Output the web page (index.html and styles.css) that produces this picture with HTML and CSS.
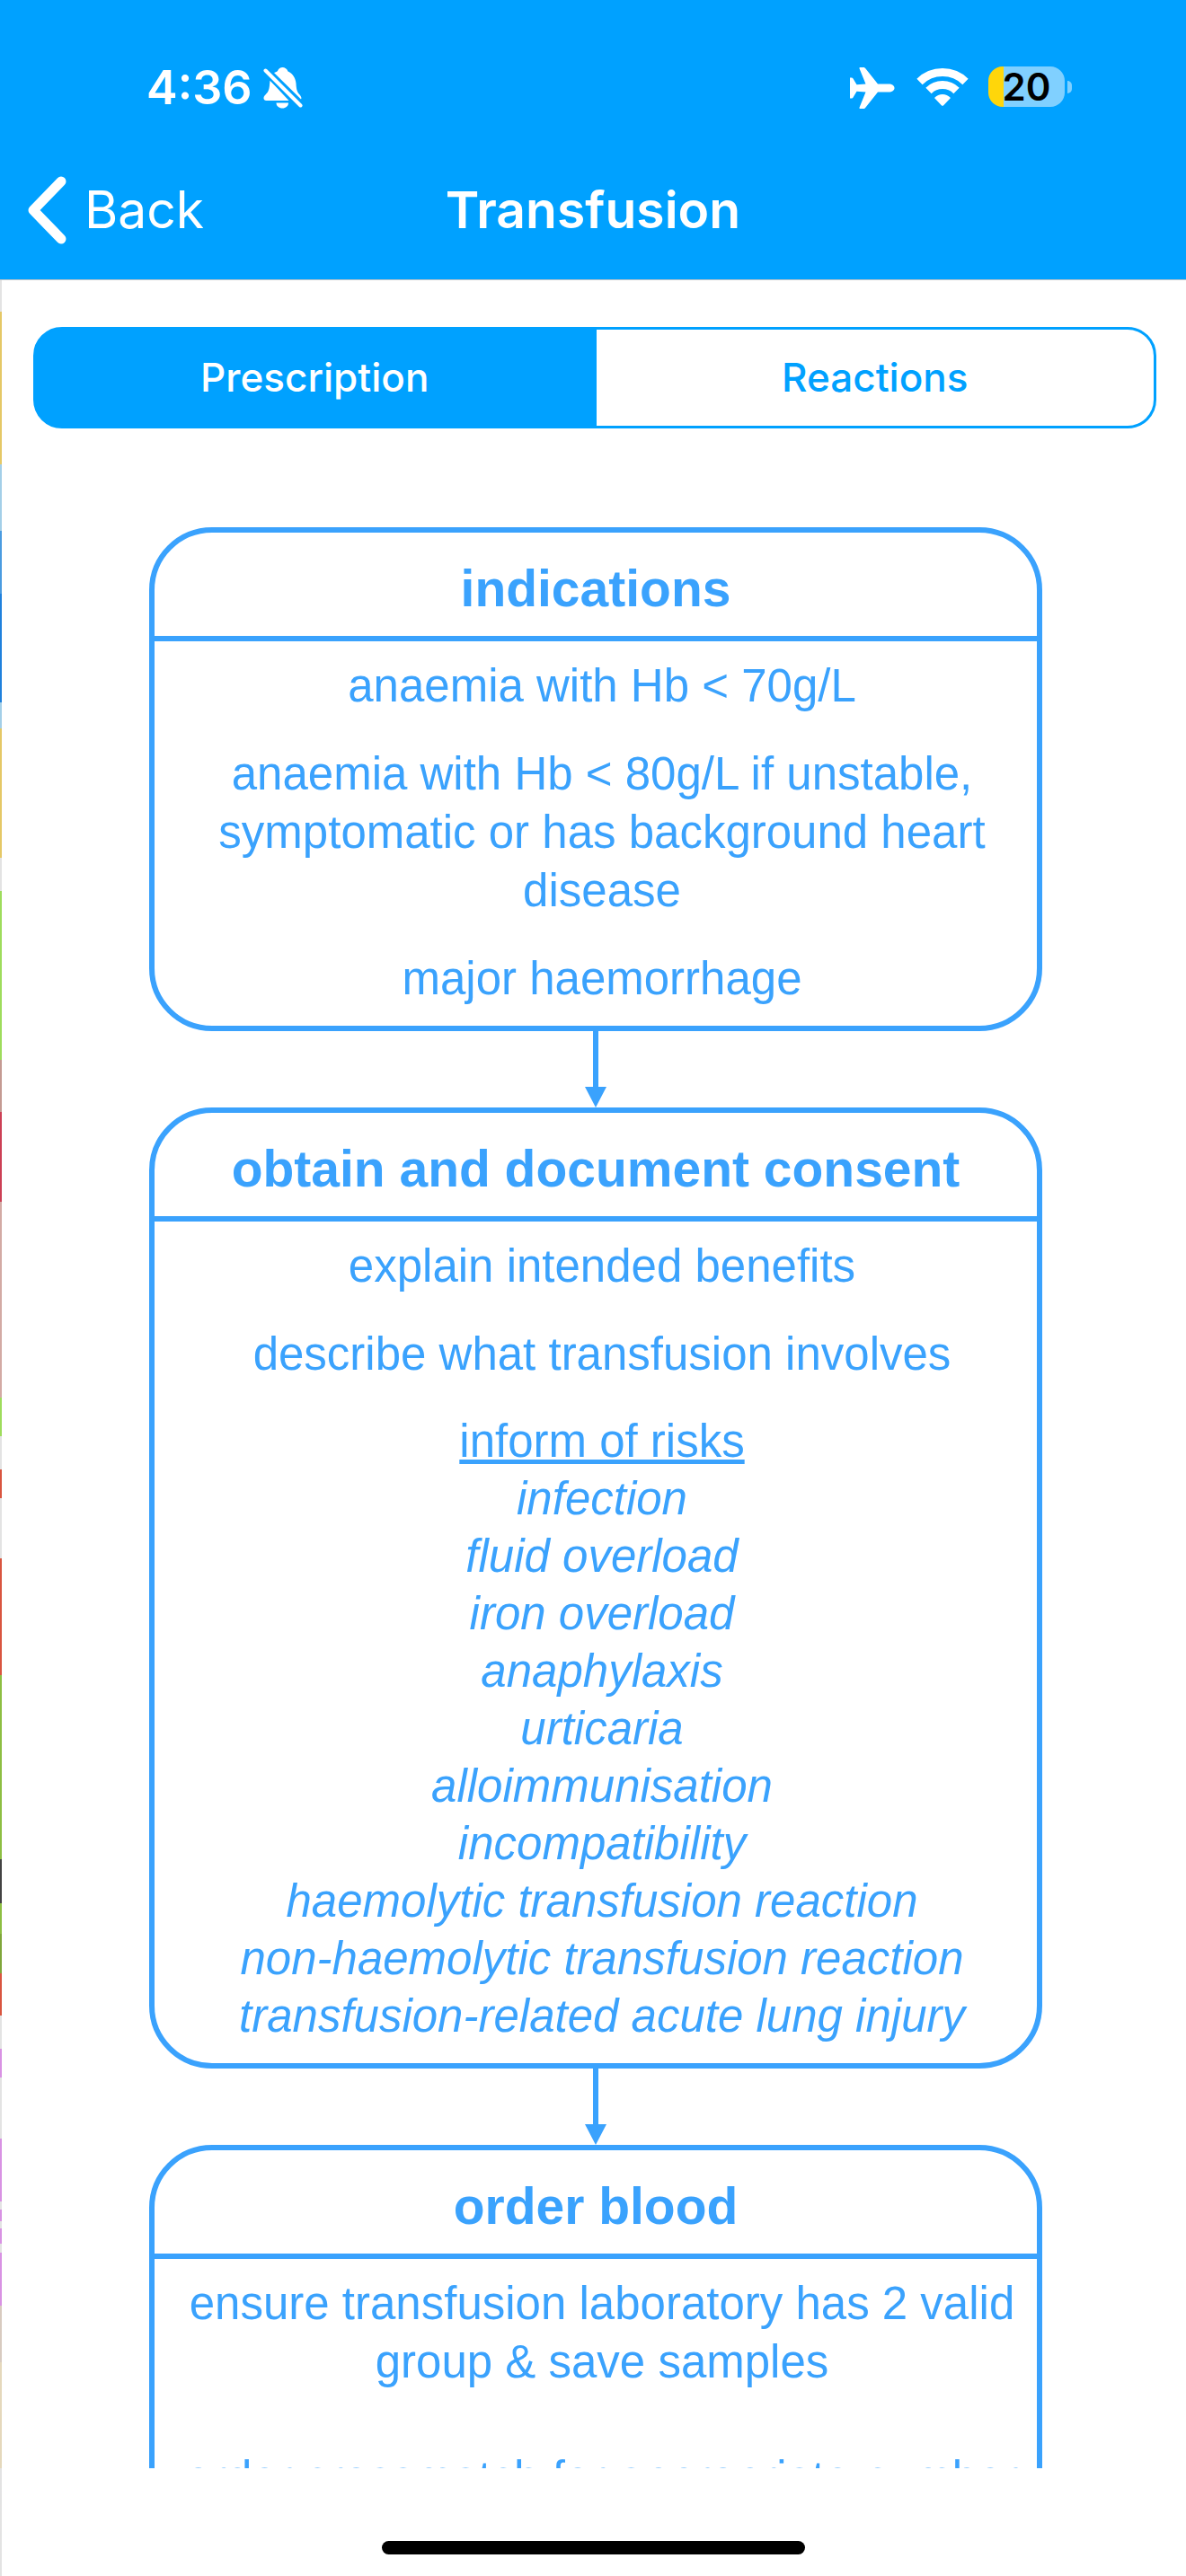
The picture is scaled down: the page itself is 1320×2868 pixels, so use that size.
FILE: index.html
```html
<!DOCTYPE html>
<html lang="en">
<head>
<meta charset="utf-8">
<meta name="viewport" content="width=device-width, initial-scale=1">
<title>Transfusion</title>
<link rel="stylesheet" href="styles.css">
</head>
<body>
<header class="top">
  <div class="status">
    <div class="status-side">
      <span class="time">4:36</span>
      <svg class="bell" viewBox="0 0 44 46" role="img" aria-label="Silent mode">
        <path fill="#fff" d="M12 6C14 5 15.500 5 16 4C17 1.500 19 0 21.500 0C24 0 26.500 1.500 27.500 4.500C33 7 36 12 36.500 18C36.800 25 38 28 41 31C42 32.500 43 34 42 35.500Z"/>
        <path fill="#fff" d="M7.500 14.500L28.500 37H3.500C.5 37 -.5 34 1.500 31.500C5 28 6.500 26 7 20Z"/>
        <path fill="#fff" d="M14.500 39.500H28C28 43 25 45.500 21.300 45.500C17.500 45.500 14.500 43 14.500 39.500Z"/>
        <path stroke="#00a1ff" stroke-width="8" d="M2 3.500L41.500 42.500"/>
        <path stroke="#fff" stroke-width="4" stroke-linecap="round" d="M2.500 3.500L41.500 42.500"/>
      </svg>
    </div>
    <div class="status-side">
      <svg class="plane" viewBox="0 0 50 46" role="img" aria-label="Airplane mode">
        <path fill="#fff" d="M43 18.500C47 18.500 49.500 20.500 49.500 23C49.500 25.500 47 27.500 43 27.500H31L17.500 44.500C16.700 45.500 16 46 15 46H11.500C10.500 46 10.300 45.300 10.600 44.500L17.500 27.500L7.500 26.800L3.500 33.500C3 34.300 2.500 34.500 1.800 34.500H0V11.500H1.800C2.500 11.500 3 11.800 3.500 12.500L7.500 19.200L17.500 18.500L10.600 1.500C10.300.7 10.500 0 11.500 0H15C16 0 16.700.5 17.500 1.500L31 18.500Z"/>
      </svg>
      <svg class="wifi" viewBox="0 0 58 43" role="img" aria-label="Wi-Fi">
        <g fill="none" stroke="#fff">
          <path stroke-width="9" d="M3.500 16A36.500 36.500 0 0 1 54.500 16"/>
          <path stroke-width="9" d="M13.500 26A22 22 0 0 1 44.500 26"/>
        </g>
        <path fill="#fff" d="M20 34C25 28.600 33 28.600 38 34L30.200 42.200C29.500 43 28.500 43 27.800 42.200Z"/>
      </svg>
      <span class="battery"><span class="battery-body">20</span><span class="battery-tip"></span></span>
    </div>
  </div>
  <nav class="bar">
    <button class="back" type="button">
      <svg class="chevron" viewBox="0 0 44 76" aria-hidden="true"><path fill="none" stroke="#fff" stroke-width="11" stroke-linecap="round" stroke-linejoin="round" d="M38 6L7 38L38 70"/></svg>
      Back
    </button>
    <h1 class="title">Transfusion</h1>
  </nav>
</header>

<main class="page">
  <div class="tabs" role="tablist">
    <button class="tab tab-on" type="button" role="tab" aria-selected="true">Prescription</button>
    <button class="tab" type="button" role="tab" aria-selected="false">Reactions</button>
  </div>
  <div class="flow">
    <section class="card">
      <h2 class="card-title">indications</h2>
      <div class="card-body">
        <p>anaemia with Hb &lt; 70g/L</p>
        <p>anaemia with Hb &lt; 80g/L if unstable, symptomatic or has background heart disease</p>
        <p>major haemorrhage</p>
      </div>
    </section>
    <svg class="arrow" viewBox="0 0 24 85" aria-hidden="true"><path d="M9 0H15V62H24L12 85L0 62H9Z"/></svg>
    <section class="card">
      <h2 class="card-title">obtain and document consent</h2>
      <div class="card-body">
        <p>explain intended benefits</p>
        <p>describe what transfusion involves</p>
        <div class="risks">
          <h3 class="risks-title">inform of risks</h3>
          <ul class="risk-list">
            <li>infection</li>
            <li>fluid overload</li>
            <li>iron overload</li>
            <li>anaphylaxis</li>
            <li>urticaria</li>
            <li>alloimmunisation</li>
            <li>incompatibility</li>
            <li>haemolytic transfusion reaction</li>
            <li>non-haemolytic transfusion reaction</li>
            <li>transfusion-related acute lung injury</li>
          </ul>
        </div>
      </div>
    </section>
    <svg class="arrow" viewBox="0 0 24 85" aria-hidden="true"><path d="M9 0H15V62H24L12 85L0 62H9Z"/></svg>
    <section class="card">
      <h2 class="card-title">order blood</h2>
      <div class="card-body card-body-loose">
        <p>ensure transfusion laboratory has 2 valid group &amp; save samples</p>
        <p>order crossmatch for appropriate number</p>
      </div>
    </section>
  </div>
</main>
<footer class="home"><span class="home-bar"></span></footer>
</body>
</html>
```
FILE: styles.css
```css
* { box-sizing: border-box; margin: 0; padding: 0; }

:root {
  --bar: #00a1ff;
  --line: #3aa2fd;
}

/* The previous screen shows as a 2px sliver along the left edge. */
body {
  display: flex;
  flex-direction: column;
  height: 100vh;
  font-family: Inter, "Liberation Sans", sans-serif;
  background: #fff linear-gradient(
    #e3e3e3 347px, #e5c866 347px 517px, #a3cfe8 517px 591px, #4a9be0 591px 661px,
    #1f80dc 661px 782px, #a3cfe8 782px 811px, #e5c866 811px 955px, #e3e3e3 955px 992px,
    #9edc5c 992px 1180px, #c49a92 1180px 1238px, #cc3f55 1238px 1338px, #d3aaa4 1338px 1556px,
    #9edc5c 1556px 1599px, #e3e3e3 1599px 1636px, #d9553f 1636px 1668px, #e3e3e3 1668px 1735px,
    #d9553f 1735px 1865px, #8dbe42 1865px 2070px, #434343 2070px 2119px, #8dbe42 2119px 2153px,
    #7fa63a 2153px 2197px, #d9553f 2197px 2244px, #e3e3e3 2244px 2281px, #d892e3 2281px 2313px,
    #e3e3e3 2313px 2381px, #d892e3 2381px 2451px, #e3e3e3 2451px 2460px, #d892e3 2460px 2473px,
    #e3e3e3 2473px 2481px, #d892e3 2481px 2498px, #e3e3e3 2498px 2508px, #d892e3 2508px 2567px,
    #d8cbc0 2567px 2630px, #e5d8bc 2630px 2748px, #e3e3e3 2748px) left top / 2px 100% no-repeat;
}

button { font: inherit; color: inherit; border: 0; background: none; }

.top { flex: none; color: #fff; background: var(--bar); border-bottom: 1px solid #c4c4c4; }

.status {
  display: flex;
  justify-content: space-between;
  padding: 64px 127px 0 163px;
}
.status-side { display: flex; align-items: center; height: 68px; }
.time { font-size: 52px; font-weight: 600; line-height: 68px; }
.bell { width: 44px; height: 46px; margin-left: 12px; }
.plane { width: 50px; height: 46px; margin-right: 24px; }
.wifi { width: 58px; height: 43px; margin: 0 22px 3px 0; }
.battery { display: flex; align-items: center; gap: 3px; margin-bottom: 3px; }
.battery-body {
  width: 85px;
  border-radius: 16px;
  background: linear-gradient(90deg, #ffd60a 17px, #80d0ff 17px);
  color: #000;
  font-size: 42px;
  font-weight: 600;
  line-height: 45px;
  text-align: center;
}
.battery-tip { width: 5px; height: 14px; border-radius: 0 5px 5px 0; background: #80d0ff; }

.bar {
  display: grid;
  grid-template-columns: 1fr auto 1fr;
  align-items: center;
  height: 179px;
  padding: 44px 30px 20px;
}
.back {
  display: flex;
  align-items: center;
  gap: 20px;
  justify-self: start;
  font-size: 57px;
  line-height: 76px;
}
.chevron { width: 44px; height: 76px; }
.title { font-size: 57px; font-weight: 600; line-height: 76px; }

.page { flex: 1; min-height: 0; overflow-y: auto; scrollbar-width: none; padding-top: 52px; }

.tabs {
  display: grid;
  grid-template-columns: 1fr 1fr;
  gap: 3px;
  margin: 0 33px 110px 37px;
  border: 3px solid var(--bar);
  border-radius: 32px;
  overflow: hidden;
  background: var(--bar);
}
.tab { color: var(--bar); background: #fff; font-size: 44px; font-weight: 500; line-height: 107px; }
.tab-on { color: #fff; background: var(--bar); }

.flow {
  display: flex;
  flex-direction: column;
  align-items: center;
  margin: 0 160px 0 166px;
  color: var(--line);
  font-family: "Liberation Sans", Arial, sans-serif;
}
.card { width: 100%; border: 6px solid var(--line); border-radius: 70px; text-align: center; }
.card-title {
  padding-top: 9px;
  border-bottom: 6px solid var(--line);
  font-size: 57px;
  line-height: 106px;
}
.card-body {
  display: flex;
  flex-direction: column;
  gap: 33px;
  padding: 17px 4px 20px 18px;
  font-size: 51px;
  line-height: 65px;
}
.card-body-loose { gap: 64px; }
.risks { line-height: 64px; }
.risks-title { font-size: 51px; font-weight: 400; text-decoration: underline; }
.risk-list { list-style: none; font-style: italic; }
.arrow { width: 24px; height: 85px; fill: var(--line); }

.home { display: flex; flex: none; justify-content: center; height: 120px; padding-top: 81px; }
.home-bar { width: 471px; height: 15px; border-radius: 8px; background: #000; }
```
